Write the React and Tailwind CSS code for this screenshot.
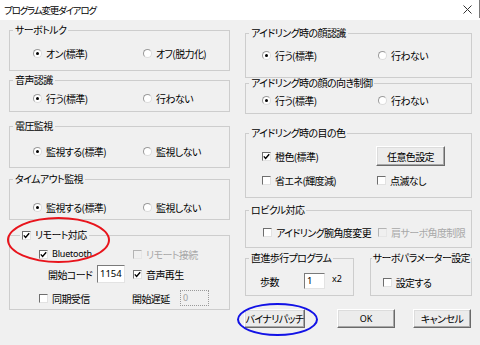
import React from 'react'

// small win32-style controls
function Group({ label, className = '', legendClass = 'ml-[3px] px-[2px]', children }) {
    return (
        <fieldset className={`border border-[#cdcdcd] ${className}`}>
            <legend className={`${legendClass} leading-[10px] whitespace-nowrap`}>{label}</legend>
            {children}
        </fieldset>
    )
}

function Radio({ checked, label, className = '' }) {
    return (
        <div className={`flex items-center h-[12px] ${className}`}>
            <span className="w-[9px] h-[9px] rounded-full border border-[#9a9a9a] border-r-[#dcdcdc] border-b-[#dcdcdc] bg-white flex items-center justify-center shrink-0">
                {checked && <span className="w-[3px] h-[3px] rounded-full bg-black"></span>}
            </span>
            <span className="ml-[4px] whitespace-nowrap">{label}</span>
        </div>
    )
}

function Check({ checked, disabled, label, className = '', labelClass = '' }) {
    return (
        <div className={`flex items-center h-[12px] ${className}`}>
            <span
                className={`w-[9px] h-[9px] border shrink-0 flex items-center justify-center ${disabled
                    ? 'border-[#b4b4b4] border-r-[#e6e6e6] border-b-[#e6e6e6] bg-[#f0f0f0]'
                    : 'border-[#6e6e6e] border-r-[#e2e2e2] border-b-[#e2e2e2] bg-white'
                    }`}
            >
                {checked && (
                    <svg width="7" height="7" viewBox="0 0 7 7">
                        <polyline points="0.8,3.4 2.6,5.4 6.2,1.2" fill="none" stroke="#000" strokeWidth="1.4" />
                    </svg>
                )}
            </span>
            <span className={`ml-[4px] whitespace-nowrap ${disabled ? 'text-[#a8a8a8]' : ''} ${labelClass}`}>{label}</span>
        </div>
    )
}

function Button({ children, className = '' }) {
    return (
        <div className={`flex items-center justify-center bg-[#ececec] border border-t-white border-l-white border-r-[#6a6a6a] border-b-[#6a6a6a] shadow-[inset_-1px_-1px_0_#a8a8a8,inset_1px_1px_0_#dcdcdc] whitespace-nowrap ${className}`}>
            {children}
        </div>
    )
}

export default function App() {
    return (
        <div className="relative w-[480px] h-[345px] bg-[#f0f0f0] text-[10px] tracking-[-0.6px] text-black overflow-hidden font-['Noto_Sans_CJK_JP',sans-serif] [font-feature-settings:'palt']">
            {/* title bar */}
            <div className="h-[20px] bg-white flex items-center pl-[4px] text-[9.5px] tracking-[-1.2px]">
                <span className="flex-1">プログラム変更ダイアログ</span>
                <svg width="9" height="9" viewBox="0 0 9 9" className="mr-[7px] -mt-[2px]">
                    <path d="M0.5 0.5 L8.5 8.5 M8.5 0.5 L0.5 8.5" stroke="#333" strokeWidth="1" />
                </svg>
                <div className="w-[1px] h-[18px] self-start bg-[#7a7a7a]"></div>
            </div>

            <div className="flex pl-[9px]">
                {/* left column */}
                <div className="w-[221px] flex flex-col mt-[5px]">
                    <Group label="サーボトルク" className="h-[46px]">
                        <div className="flex mt-[12px] pl-[23px]">
                            <Radio checked label="オン(標準)" className="w-[110px]" />
                            <Radio label="オフ(脱力化)" />
                        </div>
                    </Group>
                    <Group label="音声認識" className="h-[37px] mt-[4px]">
                        <div className="flex mt-[7px] pl-[23px]">
                            <Radio checked label="行う(標準)" className="w-[110px]" />
                            <Radio label="行わない" />
                        </div>
                    </Group>
                    <Group label="電圧監視" className="h-[47px] mt-[9px]">
                        <div className="flex mt-[14px] pl-[23px]">
                            <Radio checked label="監視する(標準)" className="w-[110px]" />
                            <Radio label="監視しない" />
                        </div>
                    </Group>
                    <Group label="タイムアウト監視" className="h-[46px] mt-[6px]">
                        <div className="flex mt-[17px] pl-[23px]">
                            <Radio checked label="監視する(標準)" className="w-[110px]" />
                            <Radio label="監視しない" />
                        </div>
                    </Group>
                    <Group
                        label={<Check checked label="リモート対応" className="h-[10px]" labelClass="ml-[3px]" />}
                        legendClass="ml-[10px] px-[2px]"
                        className="h-[81px] mt-[9px]"
                    >
                        <div className="flex items-center h-[14px] mt-[6px] pl-[29px]">
                            <Check checked label="Bluetooth" className="w-[94px]" labelClass="text-[9px] font-['Noto_Sans',sans-serif] tracking-[-0.2px]" />
                            <Check disabled label="リモート接続" />
                        </div>
                        <div className="flex items-center h-[18px] mt-[4px] pl-[38px]">
                            <span className="w-[49px]">開始コード</span>
                            <div className="w-[28px] h-[18px] bg-white border border-[#7a7a7a] border-r-[#e3e3e3] border-b-[#e3e3e3] flex items-center pl-[2px] text-[9.5px] tracking-normal font-['Noto_Sans',sans-serif]">1154</div>
                            <Check checked label="音声再生" className="ml-[8px]" />
                        </div>
                        <div className="flex items-center h-[16px] mt-[7px] pl-[29px]">
                            <Check label="同期受信" className="w-[93px]" />
                            <span className="w-[48px]">開始遅延</span>
                            <div className="w-[29px] h-[16px] bg-[#f0f0f0] border border-dotted border-[#9a9a9a] flex items-center pl-[2px] text-[9px] text-[#a0a0a0] font-['Noto_Sans',sans-serif]">0</div>
                        </div>
                    </Group>
                </div>

                {/* right column */}
                <div className="w-[227px] ml-[15px] flex flex-col mt-[8px]">
                    <Group label="アイドリング時の顔認識" className="h-[50px]">
                        <div className="flex mt-[11px] pl-[16px]">
                            <Radio checked label="行う(標準)" className="w-[116px]" />
                            <Radio label="行わない" />
                        </div>
                    </Group>
                    <Group label="アイドリング時の顔の向き制御" className="h-[36px]">
                        <div className="flex mt-[6px] pl-[16px]">
                            <Radio checked label="行う(標準)" className="w-[116px]" />
                            <Radio label="行わない" />
                        </div>
                    </Group>
                    <Group label="アイドリング時の目の色" className="h-[70px] mt-[14px]">
                        <div className="flex items-center h-[20px] mt-[8px] pl-[16px]">
                            <Check checked label="橙色(標準)" className="w-[114px]" />
                            <Button className="w-[69px] h-[20px]">任意色設定</Button>
                        </div>
                        <div className="flex mt-[8px] pl-[16px]">
                            <Check label="省エネ(輝度減)" className="w-[115px]" />
                            <Check label="点滅なし" />
                        </div>
                    </Group>
                    <Group label="ロビクル対応" className="h-[43px] mt-[7px]">
                        <div className="flex mt-[11px] pl-[17px]">
                            <Check label="アイドリング腕角度変更" className="w-[115px]" />
                            <Check disabled label="肩サーボ角度制限" />
                        </div>
                    </Group>
                    <div className="flex mt-[5px]">
                        <Group label="直進歩行プログラム" className="w-[111px] h-[43px]">
                            <div className="flex items-center h-[16px] mt-[10px] pl-[14px]">
                                <span className="w-[44px]">歩数</span>
                                <div className="w-[21px] h-[16px] bg-white border border-[#7a7a7a] border-r-[#e3e3e3] border-b-[#e3e3e3] flex items-center pl-[2px] text-[9.5px] tracking-normal font-['Noto_Sans',sans-serif]">1</div>
                                <span className="ml-[7px] mb-[5px] text-[9px] tracking-normal font-['Noto_Sans',sans-serif]">x2</span>
                            </div>
                        </Group>
                        <Group label="サーボパラメーター設定" legendClass="ml-[1px] px-[1px]" className="w-[100px] h-[43px] ml-[16px]">
                            <div className="flex mt-[13px] pl-[12px]">
                                <Check label="設定する" />
                            </div>
                        </Group>
                    </div>
                    <div className="flex mt-[13px] -ml-[1px]">
                        <Button className="w-[61px] h-[19px]">バイナリパッチ</Button>
                        <Button className="w-[58px] h-[19px] ml-[32px] text-[9px] tracking-normal font-['Noto_Sans',sans-serif]">OK</Button>
                        <Button className="w-[58px] h-[19px] ml-[18px]">キャンセル</Button>
                    </div>
                </div>
            </div>

            {/* annotation marks drawn over the dialog */}
            <div className="absolute left-[7px] top-[217px] w-[103px] h-[46px] rounded-[50%] border-2 border-[#e8141c] pointer-events-none"></div>
            <div className="absolute left-[237px] top-[303px] w-[81px] h-[33px] rounded-[50%] border-2 border-[#1212e6] pointer-events-none"></div>
        </div>
    )
}
